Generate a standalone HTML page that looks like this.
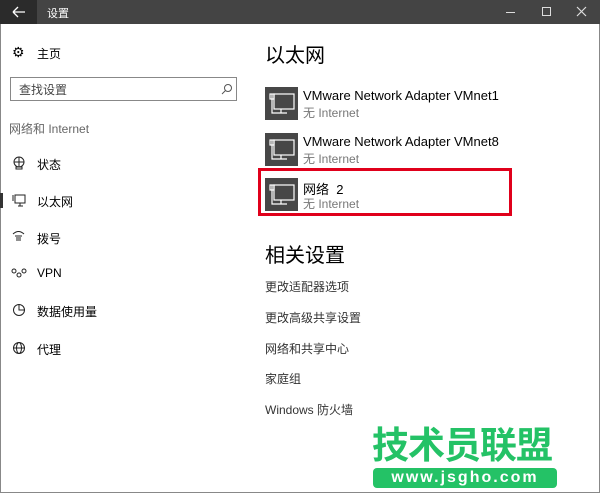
<!DOCTYPE html>
<html><head><meta charset="utf-8"><style>
*{margin:0;padding:0;box-sizing:border-box}
body{width:600px;height:493px;background:#fff;position:relative;overflow:hidden;font-family:"Liberation Sans","Noto Sans CJK SC",sans-serif;color:#000}
.a{position:absolute;white-space:nowrap}
.tb{left:0;top:0;width:600px;height:24px;background:#444}
.bk{left:0;top:0;width:37px;height:24px;background:#2b2b2b}
.nav{font-size:12px;color:#000}
.ic{position:absolute;left:265px;width:33px;height:33px;background:#474747}
.t1{font-size:13px;color:#000}
.t2{font-size:12px;color:#777}
.lk{left:265px;font-size:12px;color:#333}
</style></head><body>
<div class="a tb"></div><div class="a bk"></div>
<svg class="a" style="left:12px;top:6px" width="14" height="12"><path d="M1 6H13M1 6L6 1M1 6L6 11" stroke="#fff" stroke-width="1.3" fill="none"/></svg>
<div class="a" style="left:47px;top:5px;font-size:11px;color:#fff">设置</div>
<div class="a" style="left:506px;top:12px;width:9px;height:1px;background:#ddd"></div>
<div class="a" style="left:542px;top:7px;width:9px;height:9px;border:1px solid #ddd"></div>
<svg class="a" style="left:576px;top:6px" width="11" height="11"><path d="M1 1L10 10M10 1L1 10" stroke="#ddd" stroke-width="1.2"/></svg>
<div class="a" style="left:0;top:24px;width:1px;height:469px;background:#888"></div>
<div class="a" style="left:599px;top:24px;width:1px;height:469px;background:#888"></div>
<div class="a" style="left:0;top:492px;width:600px;height:1px;background:#888"></div>

<div class="a" style="left:12px;top:44px;font-size:14px">⚙</div>
<div class="a nav" style="left:37px;top:45px">主页</div>
<div class="a" style="left:10px;top:77px;width:227px;height:24px;border:1px solid #888"></div>
<div class="a" style="left:19px;top:81px;font-size:12px;color:#444">查找设置</div>
<svg class="a" style="left:221px;top:83px" width="12" height="12"><circle cx="7" cy="5" r="3.5" stroke="#555" fill="none"/><path d="M4.5 7.5L1 11" stroke="#555"/></svg>
<div class="a" style="left:9px;top:120px;font-size:12px;color:#666">网络和 Internet</div>
<svg class="a" style="left:12px;top:156px" width="14" height="14" fill="none" stroke="#222"><circle cx="7" cy="6" r="5"/><path d="M2 6H12M7 1V11M4 11H10V13H4Z"/></svg>
<div class="a nav" style="left:37px;top:156px">状态</div>
<div class="a" style="left:0;top:193px;width:3px;height:15px;background:#333"></div>
<svg class="a" style="left:12px;top:194px" width="14" height="13" fill="none" stroke="#222"><rect x="3" y="1" width="10" height="8"/><path d="M1 1V7M6 12H11M8 9V12"/></svg>
<div class="a nav" style="left:37px;top:193px">以太网</div>
<svg class="a" style="left:12px;top:230px" width="13" height="13" fill="none" stroke="#222"><path d="M1 4Q6.5 -1 12 4M3 6H10M4 8H9M4 10H9"/></svg>
<div class="a nav" style="left:37px;top:230px">拨号</div>
<svg class="a" style="left:11px;top:268px" width="16" height="10" fill="none" stroke="#222"><circle cx="3" cy="3" r="2"/><circle cx="8" cy="7" r="2"/><circle cx="13" cy="3" r="2"/></svg>
<div class="a nav" style="left:37px;top:266px">VPN</div>
<svg class="a" style="left:12px;top:303px" width="14" height="14" fill="none" stroke="#222"><circle cx="7" cy="7" r="5.5"/><path d="M7 1.5V7H12.5"/></svg>
<div class="a nav" style="left:37px;top:303px">数据使用量</div>
<svg class="a" style="left:12px;top:341px" width="14" height="14" fill="none" stroke="#222"><circle cx="7" cy="7" r="5.5"/><ellipse cx="7" cy="7" rx="2.5" ry="5.5"/><path d="M1.5 7H12.5"/></svg>
<div class="a nav" style="left:37px;top:341px">代理</div>

<div class="a" style="left:265px;top:39px;font-size:20px">以太网</div>
<div class="ic" style="top:87px"></div><div class="ic" style="top:133px"></div><div class="ic" style="top:178px"></div>
<svg class="a" style="left:265px;top:87px" width="33" height="125"><g id="m" fill="none" stroke="#fff" stroke-width="1.2"><rect x="9" y="7" width="20" height="15"/><path d="M7 7V26H16M16 22V26H22"/><rect x="5" y="7" width="4" height="5"/></g><use href="#m" y="46"/><use href="#m" y="91"/></svg>
<div class="a t1" style="left:303px;top:88px">VMware Network Adapter VMnet1</div>
<div class="a t2" style="left:303px;top:104px">无 Internet</div>
<div class="a t1" style="left:303px;top:134px">VMware Network Adapter VMnet8</div>
<div class="a t2" style="left:303px;top:150px">无 Internet</div>
<div class="a t1" style="left:303px;top:179px">网络&nbsp; 2</div>
<div class="a t2" style="left:303px;top:195px">无 Internet</div>
<div class="a" style="left:258px;top:168px;width:254px;height:48px;border:3px solid #e0001b"></div>

<div class="a" style="left:265px;top:239px;font-size:20px">相关设置</div>
<div class="a lk" style="top:278px">更改适配器选项</div>
<div class="a lk" style="top:309px">更改高级共享设置</div>
<div class="a lk" style="top:340px">网络和共享中心</div>
<div class="a lk" style="top:370px">家庭组</div>
<div class="a lk" style="top:401px">Windows 防火墙</div>

<div class="a" style="left:372px;top:420px;font-size:37px;font-weight:bold;color:#24c266;letter-spacing:-1px;font-family:'Noto Sans CJK SC',sans-serif;line-height:44px">技术员联盟</div>
<div class="a" style="left:373px;top:468px;width:184px;height:20px;background:#24c266;border-radius:4px;color:#fff;font-size:16px;font-weight:bold;text-align:center;line-height:20px;letter-spacing:2px">www.jsgho.com</div>
</body></html>
